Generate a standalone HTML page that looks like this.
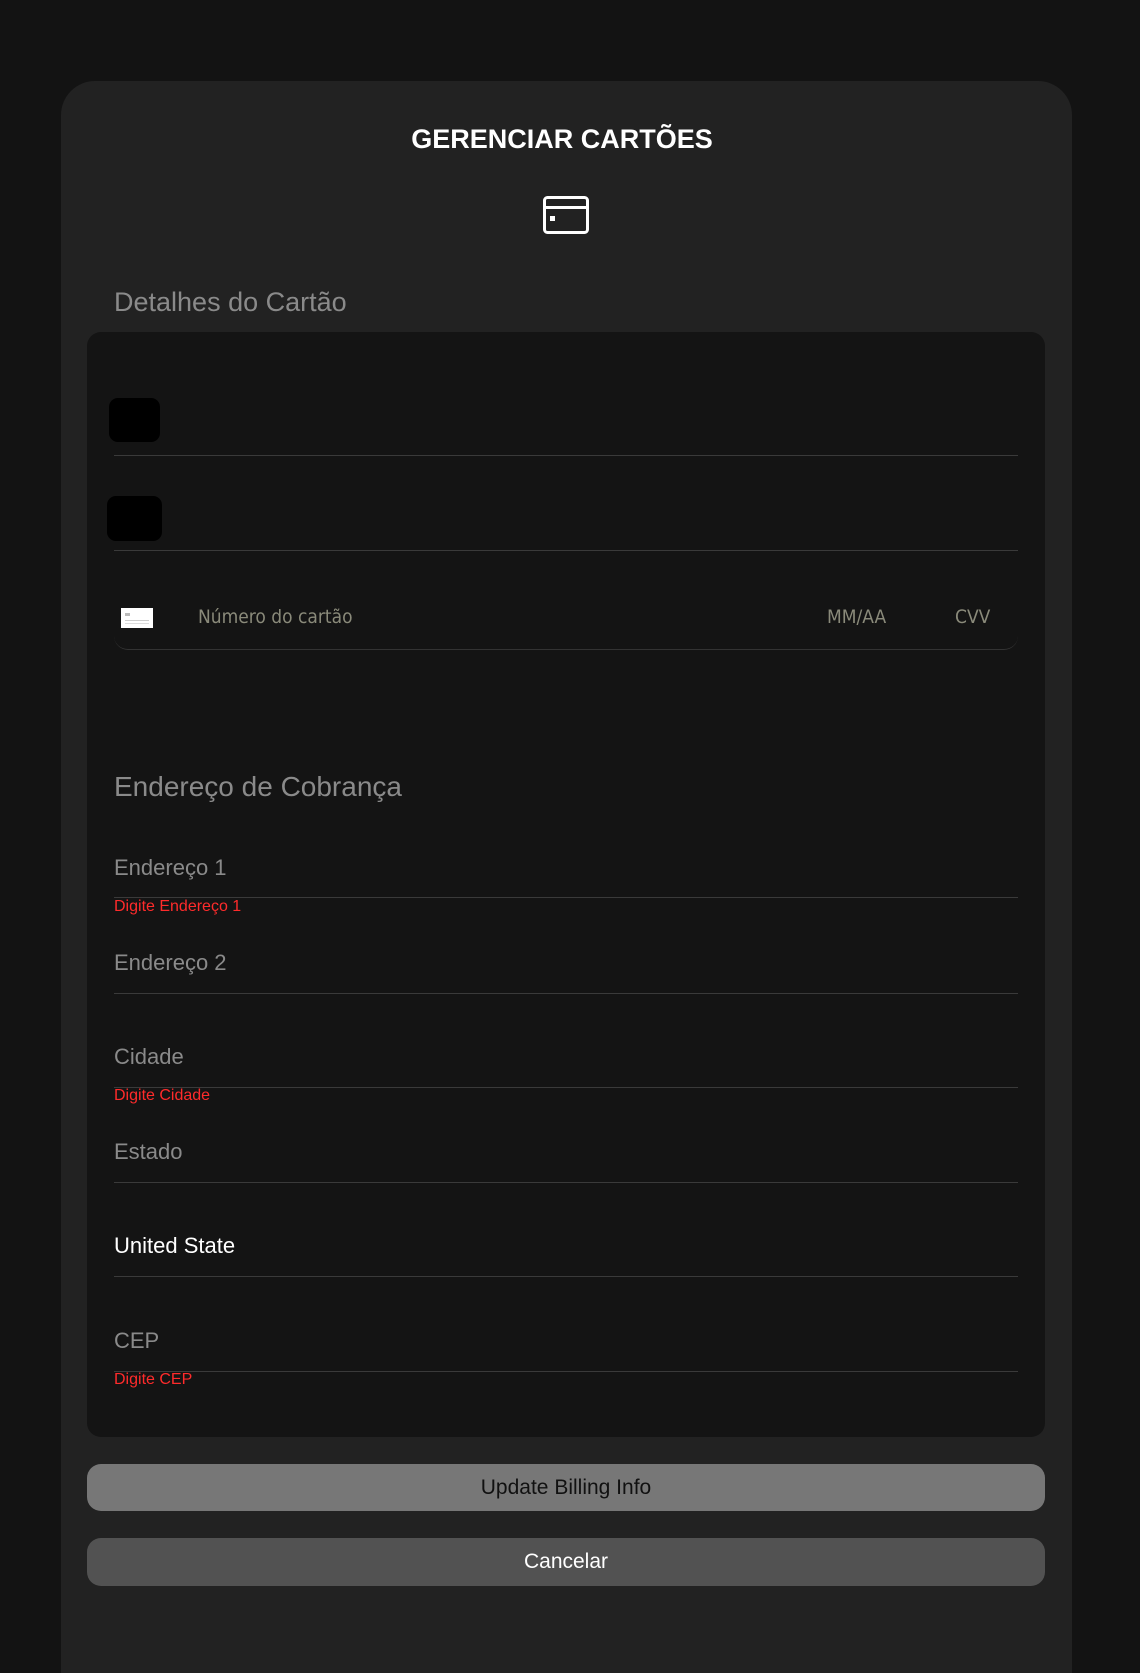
<!DOCTYPE html>
<html style="overflow:hidden;height:1673px"><head><meta charset="utf-8"><style>
*{margin:0;padding:0;box-sizing:border-box}
body{width:1140px;height:1673px;background:#131313;position:relative;overflow:hidden;font-family:"Liberation Sans",Arial,sans-serif}
.a{position:absolute}
.card{left:61px;top:81px;width:1011px;height:1592px;background:#222;border-radius:34px 34px 0 0}
.panel{left:87px;top:332px;width:958px;height:1105px;background:#141414;border-radius:14px}
.line{left:114px;width:904px;height:1px;background:#3a3a3a}
.lab{left:114px;font-size:22px;color:#8a8a8a;line-height:1}
.err{left:114px;font-size:16px;color:#ff2b2b;line-height:1}
.btn{left:87px;width:958px;border-radius:14px;font-size:21px;text-align:center}
</style></head><body>
<div class="a card"></div>
<div class="a" style="left:-8px;width:1140px;top:124px;text-align:center;color:#fff;font-weight:bold;font-size:27px">GERENCIAR CARTÕES</div>
<svg class="a" style="left:543px;top:196px" width="46" height="38" viewBox="0 0 46 38"><rect x="1.5" y="1.5" width="43" height="35" rx="3" fill="none" stroke="#fff" stroke-width="3"/><rect x="1.5" y="10" width="43" height="3" fill="#fff"/><rect x="7" y="20" width="5" height="5" fill="#fff"/></svg>
<div class="a" style="left:114px;top:287px;font-size:27px;color:#8a8a8a">Detalhes do Cartão</div>
<div class="a panel"></div>
<div class="a" style="left:109px;top:398px;width:51px;height:44px;background:#000;border-radius:9px"></div>
<div class="a line" style="top:455px"></div>
<div class="a" style="left:107px;top:496px;width:55px;height:45px;background:#000;border-radius:9px"></div>
<div class="a line" style="top:550px"></div>
<div class="a" style="left:114px;top:610px;width:904px;height:40px;border-bottom:1px solid #333;border-radius:0 0 14px 14px"></div>
<svg class="a" style="left:121px;top:608px" width="32" height="20" viewBox="0 0 32 20"><rect width="32" height="20" fill="#fff"/><rect x="4" y="5" width="5" height="3" fill="#bbb"/><rect x="4" y="12" width="24" height="1" fill="#ccc"/><rect x="4" y="15" width="24" height="1" fill="#ddd"/></svg>
<div class="a" style="left:198px;top:606px;font-size:19px;color:#8a8a7a;font-family:'DejaVu Sans Condensed','Liberation Sans Narrow',sans-serif">Número do cartão</div>
<div class="a" style="left:827px;top:606px;font-size:19px;color:#8a8a7a;font-family:'DejaVu Sans Condensed','Liberation Sans Narrow',sans-serif">MM/AA</div>
<div class="a" style="left:955px;top:606px;font-size:19px;color:#8a8a7a;font-family:'DejaVu Sans Condensed','Liberation Sans Narrow',sans-serif">CVV</div>
<div class="a" style="left:114px;top:771px;font-size:28px;color:#8a8a8a">Endereço de Cobrança</div>
<div class="a lab" style="top:857px">Endereço 1</div>
<div class="a line" style="top:897px"></div>
<div class="a err" style="top:899px">Digite Endereço 1</div>
<div class="a lab" style="top:952px">Endereço 2</div>
<div class="a line" style="top:993px"></div>
<div class="a lab" style="top:1046px">Cidade</div>
<div class="a line" style="top:1087px"></div>
<div class="a err" style="top:1088px">Digite Cidade</div>
<div class="a lab" style="top:1141px">Estado</div>
<div class="a line" style="top:1182px"></div>
<div class="a lab" style="top:1235px;color:#fff">United State</div>
<div class="a line" style="top:1276px"></div>
<div class="a lab" style="top:1330px">CEP</div>
<div class="a line" style="top:1371px"></div>
<div class="a err" style="top:1372px">Digite CEP</div>
<div class="a btn" style="top:1464px;height:47px;line-height:47px;background:#777;color:#111">Update Billing Info</div>
<div class="a btn" style="top:1538px;height:48px;line-height:48px;background:#525252;color:#fff">Cancelar</div>
</body></html>
